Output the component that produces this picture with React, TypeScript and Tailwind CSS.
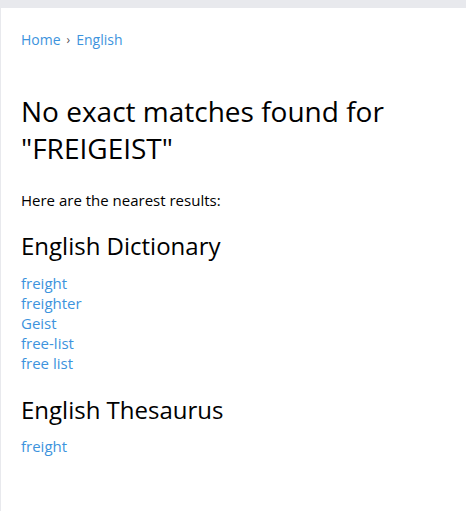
const dictionary = ["freight", "freighter", "Geist", "free-list", "free list"];
const thesaurus = ["freight"];

function LinkList({ items }: { items: string[] }) {
  return (
    <ul className="flex flex-col">
      {items.map((w, i) => (
        <li key={i} className="text-[15px] leading-5">
          <a href="#" className="text-[#3d93dd]">
            {w}
          </a>
        </li>
      ))}
    </ul>
  );
}

export default function App() {
  return (
    <div className="min-h-[511px] bg-[#e8e9ed] pt-2 font-['Open_Sans',sans-serif] text-black">
      <div className="ml-px min-h-[503px] bg-white px-5 pt-[22px]">
        <nav className="flex items-center text-sm leading-5 text-[#3d93dd]">
          <a href="#">Home</a>
          <span className="mx-[6px] text-xs text-[#555]">›</span>
          <a href="#">English</a>
        </nav>

        <h1 className="mt-[43px] text-[28px] leading-[37px] font-normal">
          No exact matches found for "FREIGEIST"
        </h1>

        <p className="mt-[23px] text-[15px] leading-5">Here are the nearest results:</p>

        <h2 className="mt-[20px] mb-[11px] text-2xl leading-8 font-normal">English Dictionary</h2>
        <LinkList items={dictionary} />

        <h2 className="mt-[21px] mb-[10px] text-2xl leading-8 font-normal">English Thesaurus</h2>
        <LinkList items={thesaurus} />
      </div>
    </div>
  );
}
